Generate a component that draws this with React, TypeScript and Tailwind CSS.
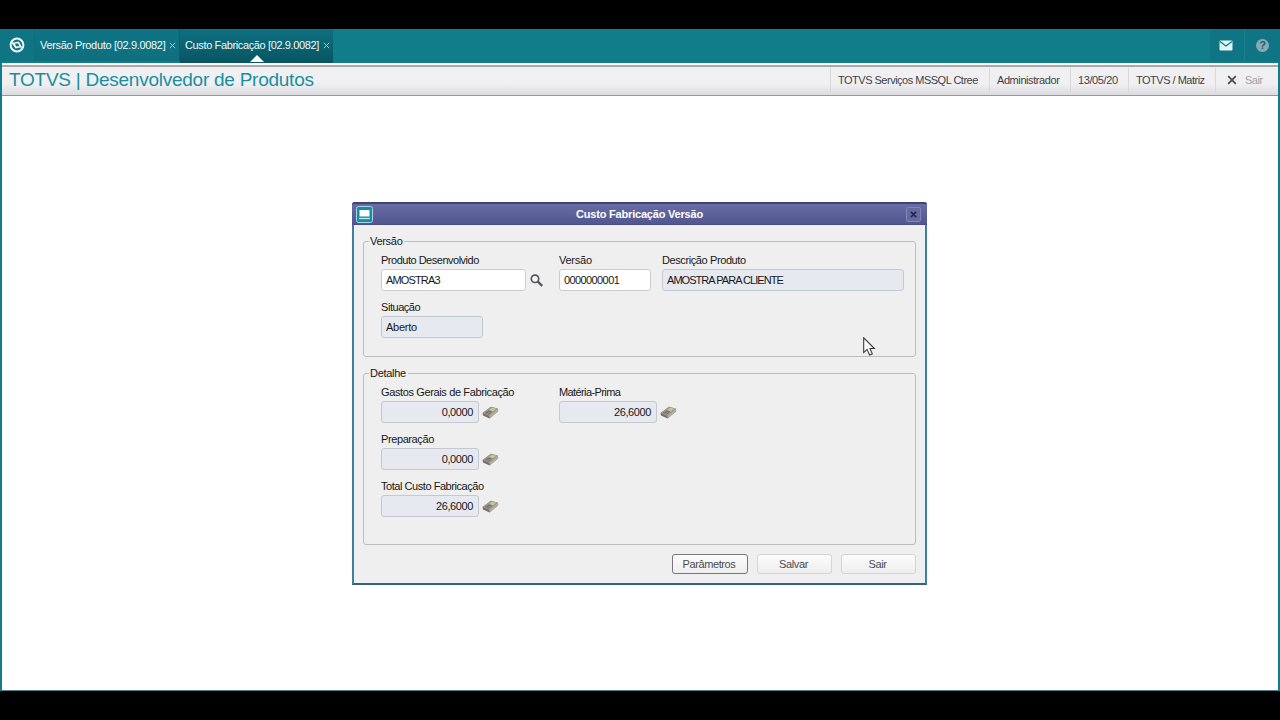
import type { ReactNode } from "react";

function TotvsMark() {
  return (
    <svg width="16" height="16" viewBox="0 0 16 16" fill="none">
      <circle cx="8" cy="8" r="6.4" stroke="#f2fbfc" strokeWidth="2" />
      <path d="M2.5 5.2 L5 5.4 L9.8 4.6 L12.6 9.4 L13.4 11 L10.8 10.6 L6.6 11.4 L3.4 7 Z" fill="#f2fbfc" />
      <path d="M5.9 6.7 L9 6.2 L10.4 8.9 L7.3 9.5 Z" fill="#0f7484" />
    </svg>
  );
}

function Cross({ size, color, width }: { size: number; color: string; width: number }) {
  return (
    <svg width={size} height={size} viewBox="0 0 10 10" className="block shrink-0">
      <path d="M1.2 1.2 L8.8 8.8 M8.8 1.2 L1.2 8.8" stroke={color} strokeWidth={width} />
    </svg>
  );
}

function Calculator() {
  return (
    <svg width="17" height="13" viewBox="0 0 17 13" className="block shrink-0">
      <path d="M0.5 7 L9 0.8 L15.8 2.8 L16.2 5.2 L7.6 12.4 L1 9.4 Z" fill="#77706b" />
      <path d="M0.7 6.9 L9 0.8 L15.8 2.8 L7.4 10 Z" fill="#a39b92" />
      <path d="M7.4 10 L15.8 2.8 L16.2 5.2 L7.6 12.4 Z" fill="#b9aea3" />
      <path d="M7.4 3.7 L10.3 1.7 L14 2.8 L11.2 5.2 Z" fill="#b4d489" />
      <path d="M2.8 6.9 L6.4 4.4 L10 5.7 L6.8 8.7 Z" fill="#736b66" />
      <path d="M4 7 L7.2 8 M5.6 5.8 L8.6 6.8" stroke="#b9b0a6" strokeWidth="0.5" />
    </svg>
  );
}

function Field({
  label,
  value,
  width,
  track,
  labelTrack,
  editable = false,
  numeric = false,
  children,
}: {
  label: string;
  value: string;
  width: string;
  track: string;
  labelTrack: string;
  editable?: boolean;
  numeric?: boolean;
  children?: ReactNode;
}) {
  return (
    <div className="flex h-[47px] flex-col">
      <div className={`h-[17px] text-[11px] leading-[17px] whitespace-nowrap text-[#171717] ${labelTrack}`}>{label}</div>
      <div className="flex items-center">
        <div
          className={`h-[22px] rounded-[3px] border pl-[4px] text-[11px] leading-[20px] whitespace-nowrap text-[#171717] ${width} ${track} ${
            editable ? "border-[#cdcdcd] bg-white" : "border-[#c5c8d0] bg-[#e6e9f0]"
          } ${numeric ? "pr-[5px] text-right" : ""}`}
        >
          {value}
        </div>
        {children}
      </div>
    </div>
  );
}

function Group({ title, height, children }: { title: string; height: string; children: ReactNode }) {
  return (
    <section className={`rounded-[3px] border border-[#bdbdbd] ${height}`}>
      <div className="-mt-[8px] ml-[5px] h-[15px] w-fit bg-[#efefef] pr-[2px] pl-[1px] text-[11px] leading-[15px] tracking-[-0.3px] text-[#171717]">
        {title}
      </div>
      <div className="pt-[3px] pl-[17px]">{children}</div>
    </section>
  );
}

function Button({ label, width, active = false }: { label: string; width: string; active?: boolean }) {
  return (
    <button
      className={`h-[20px] rounded-[3px] border bg-linear-to-b from-[#fcfcfc] to-[#eeeeee] pr-[2px] text-[11px] leading-[18px] tracking-[-0.4px] text-[#4a4a4e] ${width} ${
        active ? "border-[#77777b]" : "border-[#d5d5d5]"
      }`}
    >
      {label}
    </button>
  );
}

function Dialog() {
  return (
    <div className="mt-[106px] ml-[350px] h-[383px] w-[575px] rounded-t-[3px] border-x-2 border-b-2 border-x-[#3f7fa4] border-b-[#2f6580] bg-[#efefef]">
      <div className="-mx-[2px] flex h-[23px] items-center rounded-t-[3px] border-t-2 border-b border-t-[#40446f] border-b-[#4b4f86] bg-linear-to-b from-[#686da6] to-[#51568f] pl-[4px]">
        <svg width="17" height="17" viewBox="0 0 17 17" className="shrink-0">
          <rect x="0.5" y="0.5" width="16" height="16" rx="2" fill="#168ba3" stroke="#a6d8e4" />
          <rect x="3.5" y="4" width="10" height="6.5" fill="#fff" />
          <path d="M3 12.5 H14" stroke="#c4e8ee" strokeWidth="1.3" />
        </svg>
        <div className="flex-1 text-center text-[11px] leading-[20px] font-bold tracking-[-0.2px] text-white">
          Custo Fabricação Versão
        </div>
        <div className="mr-[6px] flex h-[15px] w-[15px] items-center justify-center rounded-[2px] border border-[#8286b6] bg-[#646a9f]">
          <Cross size={7} color="#232750" width={2.2} />
        </div>
      </div>
      <div className="px-[9px] pt-[16px]">
        <Group title="Versão" height="h-[116px]">
          <div className="flex">
            <Field
              label="Produto Desenvolvido"
              labelTrack="tracking-[-0.49px]"
              value="AMOSTRA3"
              track="tracking-[-0.85px]"
              width="w-[145px]"
              editable
            >
              <svg width="13" height="13" viewBox="0 0 13 13" className="mr-[16px] ml-[4px]">
                <circle cx="5" cy="4.8" r="3.7" fill="#f8f8f8" stroke="#55565c" strokeWidth="1.7" />
                <path d="M7.7 7.5 L12.2 12" stroke="#55565c" strokeWidth="2.4" />
              </svg>
            </Field>
            <Field
              label="Versão"
              labelTrack="tracking-[-0.25px]"
              value="0000000001"
              track="tracking-[-0.6px]"
              width="mr-[11px] w-[92px]"
              editable
            />
            <Field
              label="Descrição Produto"
              labelTrack="tracking-[-0.4px]"
              value="AMOSTRA PARA CLIENTE"
              track="tracking-[-0.95px]"
              width="w-[242px]"
            />
          </div>
          <Field
            label="Situação"
            labelTrack="tracking-[-0.45px]"
            value="Aberto"
            track="tracking-[-0.25px]"
            width="w-[102px]"
          />
        </Group>
        <div className="h-[16px]" />
        <Group title="Detalhe" height="h-[172px]">
          <div className="flex">
            <div className="w-[178px]">
              <Field
                label="Gastos Gerais de Fabricação"
                labelTrack="tracking-[-0.37px]"
                value="0,0000"
                track="tracking-[-0.4px]"
                width="mr-[3px] w-[98px]"
                numeric
              >
                <Calculator />
              </Field>
            </div>
            <Field
              label="Matéria-Prima"
              labelTrack="tracking-[-0.6px]"
              value="26,6000"
              track="tracking-[-0.4px]"
              width="mr-[3px] w-[98px]"
              numeric
            >
              <Calculator />
            </Field>
          </div>
          <Field
            label="Preparação"
            labelTrack="tracking-[-0.4px]"
            value="0,0000"
            track="tracking-[-0.4px]"
            width="mr-[3px] w-[98px]"
            numeric
          >
            <Calculator />
          </Field>
          <Field
            label="Total Custo Fabricação"
            labelTrack="tracking-[-0.45px]"
            value="26,6000"
            track="tracking-[-0.4px]"
            width="mr-[3px] w-[98px]"
            numeric
          >
            <Calculator />
          </Field>
        </Group>
        <div className="mt-[9px] flex justify-end gap-[9px]">
          <Button label="Parâmetros" width="w-[76px]" active />
          <Button label="Salvar" width="w-[75px]" />
          <Button label="Sair" width="w-[75px]" />
        </div>
      </div>
    </div>
  );
}

function TopBar() {
  return (
    <div className="flex h-[34px] shrink-0 bg-[#117d8b] pb-[2px] text-[11px] leading-[32px] whitespace-nowrap text-[#eefafa]">
      <div className="flex w-[35px] items-center justify-center border-r border-[#0d6f7e] bg-[#0f7484]">
        <TotvsMark />
      </div>
      <div className="flex w-[145px] items-center border-r border-[#0a5f6d] bg-linear-to-b from-[#0f7484] to-[#0f6f7f] pl-[5px]">
        <span className="w-[129px] tracking-[-0.33px]">Versão Produto [02.9.0082]</span>
        <Cross size={7} color="#a9d6dc" width={1.3} />
      </div>
      <div className="relative -mb-[2px] flex w-[153px] items-center bg-linear-to-b from-[#0f7080] to-[#075562] pb-[2px] pl-[5px]">
        <span className="w-[138px] tracking-[-0.37px]">Custo Fabricação [02.9.0082]</span>
        <Cross size={7} color="#a9d6dc" width={1.3} />
        <svg width="14" height="7" viewBox="0 0 14 7" className="absolute bottom-[1px] left-[70px]">
          <path d="M7 0 L14 7 H0 Z" fill="#fff" />
        </svg>
      </div>
      <div className="flex-1" />
      <div className="flex w-[35px] items-center justify-center border-r border-[#187f8d] bg-[#0f7484] pr-[2px]">
        <svg width="14" height="11" viewBox="0 0 14 11">
          <rect x="0.5" y="0.5" width="13" height="10" rx="1" fill="#e0f3f5" />
          <path d="M1 1.5 L7 6 L13 1.5" stroke="#0f7484" strokeWidth="1.2" fill="none" />
        </svg>
      </div>
      <div className="flex w-[35px] items-center justify-center bg-[#0f7484]">
        <div className="h-[13px] w-[13px] rounded-full bg-[#8eaab1] text-center text-[11px] leading-[13px] font-bold text-[#14616e]">
          ?
        </div>
      </div>
    </div>
  );
}

function HeaderItem({ children, width }: { children: ReactNode; width: string }) {
  return <div className={`border-l border-[#d6d8de] pl-[7px] ${width}`}>{children}</div>;
}

export default function App() {
  return (
    <div className="relative flex h-[720px] w-[1280px] flex-col overflow-hidden bg-black pt-[29px] font-['Liberation_Sans',Arial,sans-serif]">
      <TopBar />
      <div className="flex h-[628px] flex-col border-x-2 border-b border-x-[#117d8b] border-b-[#4f7f8b] bg-white">
        <header className="mt-[2px] flex h-[31px] shrink-0 items-center border-t-2 border-b border-t-[#a9a9ab] border-b-[#96969b] bg-linear-to-b from-[#f0f0f3] from-60% to-[#dcdce0] pb-[2px] whitespace-nowrap">
          <div className="flex-1 pl-[7px] text-[19px] leading-[26px] tracking-[-0.25px] text-[#1a8e9f]">
            TOTVS | Desenvolvedor de Produtos
          </div>
          <div className="flex h-[24px] text-[11px] leading-[24px] text-[#3f3f45]">
            <HeaderItem width="w-[159px] tracking-[-0.5px]">TOTVS Serviços MSSQL Ctree</HeaderItem>
            <HeaderItem width="w-[81px] tracking-[-0.42px]">Administrador</HeaderItem>
            <HeaderItem width="w-[58px] tracking-[-0.4px]">13/05/20</HeaderItem>
            <HeaderItem width="w-[87px] tracking-[-0.5px]">TOTVS / Matriz</HeaderItem>
            <HeaderItem width="w-[63px] tracking-[-0.5px]">
              <div className="flex items-center pl-[4px] text-[#a0a0a5]">
                <Cross size={10} color="#4b4b50" width={1.8} />
                <span className="ml-[8px]">Sair</span>
              </div>
            </HeaderItem>
          </div>
        </header>
        <Dialog />
      </div>
      <svg width="13" height="20" viewBox="0 0 13 20" className="absolute top-[337px] left-[863px]">
        <path
          d="M0.7 0.8 V15.6 L4.1 12.4 L6.6 18 L9.3 16.9 L7 11.5 H11.4 Z"
          fill="#fff"
          stroke="#3a3a3e"
          strokeWidth="1.1"
        />
      </svg>
    </div>
  );
}
